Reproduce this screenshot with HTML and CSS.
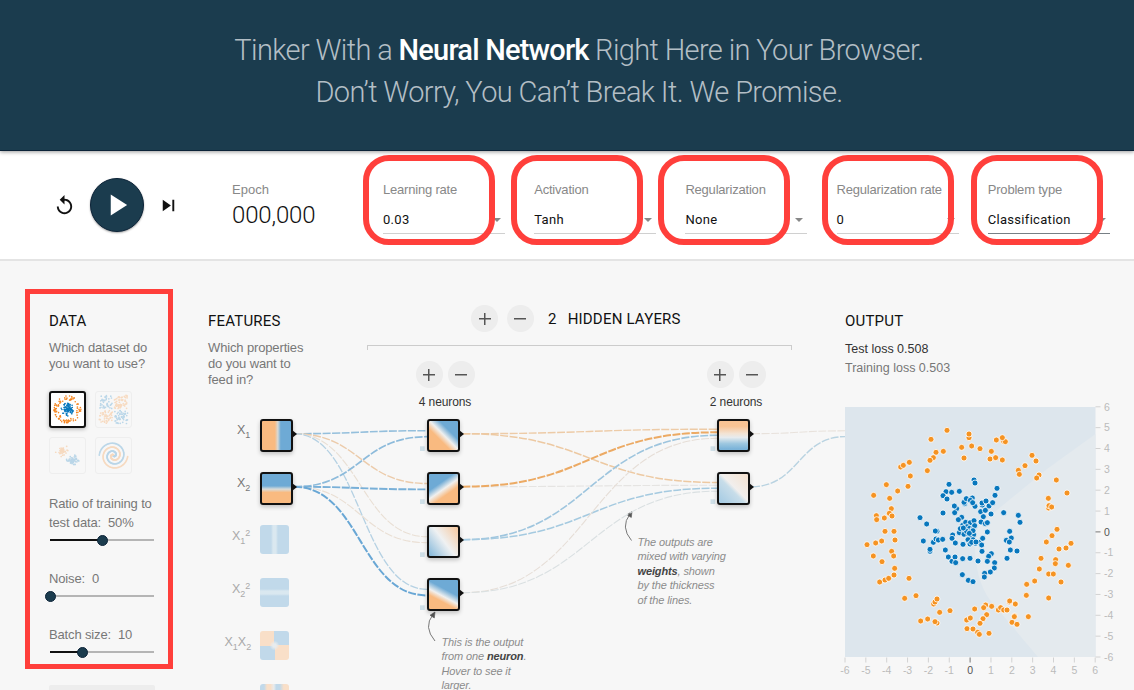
FILE: index.html
```html
<!DOCTYPE html>
<html lang="en">
<head>
<meta charset="utf-8">
<title>Neural Network Playground</title>
<link rel="stylesheet" href="styles.css">
</head>
<body>
<header class="banner">
  <h1>Tinker With a <b>Neural Network</b> Right Here in Your Browser.<br><span class="second">Don’t Worry, You Can’t Break It. We Promise.</span></h1>
</header>

<section class="toolbar">
  <div class="playback">
    <svg class="icon" viewBox="0 0 24 24"><path d="M12 5V1L7 6l5 5V7c3.31 0 6 2.69 6 6s-2.69 6-6 6-6-2.69-6-6H4c0 4.42 3.58 8 8 8s8-3.58 8-8-3.58-8-8-8z"/></svg>
    <button class="play" aria-label="Play"><svg viewBox="0 0 54 54"><path d="M20.5 16v22L37.500 27z"/></svg></button>
    <svg class="icon step" viewBox="0 0 24 24"><path d="M6 18l8.500-6L6 6v12zM16 6v12h2V6h-2z"/></svg>
  </div>
  <div class="epoch"><span class="label">Epoch</span><span class="count">000,000</span></div>
  <div class="fields">
    <div class="field"><span class="label">Learning rate</span><span class="value">0.03</span></div>
    <div class="field"><span class="label">Activation</span><span class="value">Tanh</span></div>
    <div class="field"><span class="label">Regularization</span><span class="value">None</span></div>
    <div class="field"><span class="label">Regularization rate</span><span class="value">0</span></div>
    <div class="field active"><span class="label">Problem type</span><span class="value">Classification</span></div>
  </div>
  <i class="mark m1"></i><i class="mark m2"></i><i class="mark m3"></i><i class="mark m4"></i><i class="mark m5"></i>
</section>

<main class="workspace">
  <section class="data">
    <h2>DATA</h2>
    <p class="hint">Which dataset do<br>you want to use?</p>
    <div class="datasets">
      <svg class="thumb selected" viewBox="0 0 33 33" data-kind="circle"></svg>
      <svg class="thumb" viewBox="0 0 33 33" data-kind="xor"></svg>
      <svg class="thumb" viewBox="0 0 33 33" data-kind="gauss"></svg>
      <svg class="thumb" viewBox="0 0 33 33" data-kind="spiral"></svg>
    </div>
    <div class="slider ratio"><label>Ratio of training to<br>test data:&nbsp; 50%</label><div class="track"><i class="fill" style="width:50%"></i><i class="knob"></i></div></div>
    <div class="slider"><label>Noise:&nbsp; 0</label><div class="track"><i class="fill" style="width:0%"></i><i class="knob"></i></div></div>
    <div class="slider"><label>Batch size:&nbsp; 10</label><div class="track"><i class="fill" style="width:31%"></i><i class="knob"></i></div></div>
    <div class="regenerate"></div>
  </section>

  <section class="features">
    <h2>FEATURES</h2>
    <p class="hint">Which properties<br>do you want to<br>feed in?</p>
  </section>

  <section class="hidden">
    <div class="layers"><button class="round plus"></button><button class="round"></button><h2><span class="num">2</span>HIDDEN LAYERS</h2></div>
    <div class="bracket"></div>
    <div class="neurons">
      <div class="group"><div class="pair"><button class="round plus"></button><button class="round"></button></div><span>4 neurons</span></div>
      <div class="group"><div class="pair"><button class="round plus"></button><button class="round"></button></div><span>2 neurons</span></div>
    </div>
  </section>

  <section class="output">
    <h2>OUTPUT</h2>
    <p class="loss">Test loss 0.508</p>
    <p class="loss train">Training loss 0.503</p>
    <svg class="plot" id="plot" viewBox="0 0 290 280">
      <rect width="250.5" height="250" fill="#dde6ed"/>
      <path d="M250.500 27L202 62 135 117C126 130 129 172 145 193L193 250H250.500z" fill="#e4eaee"/>
    </svg>
  </section>

  <svg class="links" viewBox="0 261 1134 429" id="links">
    <g class="arrow">
      <path d="M631.500 540.500Q620 527 630 514"/><path class="head" d="M632 511.500l-5 3.200 4.300 2.800z"/>
      <path d="M435 641Q423 627 433 614.500"/><path class="head" d="M435 612l-5 3.200 4.300 2.800z"/>
    </g>
    <g class="names">
      <text x="237" y="433.700">X<tspan class="s" y="438">1</tspan></text>
      <text x="237" y="486.700">X<tspan class="s" y="491">2</tspan></text>
      <g class="off">
        <text x="232" y="540">X<tspan class="s" y="544">1</tspan><tspan class="s" y="536">2</tspan></text>
        <text x="232" y="593">X<tspan class="s" y="597">2</tspan><tspan class="s" y="589">2</tspan></text>
        <text x="224.500" y="646">X<tspan class="s" y="650">1</tspan><tspan y="646">X</tspan><tspan class="s" y="650">2</tspan></text>
        <text x="219" y="699">sin(X<tspan class="s" y="703">1</tspan><tspan y="699">)</tspan></text>
      </g>
    </g>
  </svg>
  <div class="nodes">
    <i class="node f r1 g-x1"></i><i class="node f r2 g-x2"></i>
    <i class="node f idle r3 g-x1sq"></i><i class="node f idle r4 g-x2sq"></i><i class="node f idle r5 g-x1x2"></i><i class="node f idle r6 g-sin"></i>
    <i class="node h r1 g-h1"></i><i class="node h r2 g-h2"></i><i class="node h r3 g-h3"></i><i class="node h r4 g-h4"></i>
    <i class="node o r1 g-o1"></i><i class="node o r2 g-o2"></i>
  </div>
  <p class="note weights">The outputs are<br>mixed with varying<br><b>weights</b>, shown<br>by the thickness<br>of the lines.</p>
  <p class="note neuron">This is the output<br>from one <b>neuron</b>.<br>Hover to see it<br>larger.</p>
  <i class="frame"></i>
</main>
<script src="app.js"></script>
</body>
</html>
```
FILE: styles.css
```css
* { box-sizing: border-box; }
body { margin: 0; width: 1134px; height: 690px; overflow: hidden; background: #f7f7f7; font-family: "Liberation Sans", Arial, sans-serif; color: #777; }
button { border: 0; padding: 0; }
h1, h2, p { margin: 0; font-weight: 400; }

.banner { height: 151px; padding: 30px 0 0 24px; background: #1b3c4e; border-bottom: 1px solid #0c2338; text-align: center; position: relative; z-index: 2; box-shadow: 0 1px 4px rgba(0,0,0,.4); }
.banner h1 { font: 300 29px/41.5px Roboto, sans-serif; color: #b3bec5; letter-spacing: -.63px; white-space: nowrap; }
.banner b { font-weight: 500; color: #fff; letter-spacing: -.8px; }

.toolbar { position: relative; height: 110px; background: #fff; border-bottom: 2px solid #e4e4e4; display: flex; align-items: flex-start; padding-left: 53px; }
.playback { display: flex; align-items: center; padding-top: 27px; width: 179px; }
.icon { width: 23px; height: 23px; fill: #111; }
.step { margin-left: -1px; }
.play { width: 54px; height: 54px; margin: 0 14px; border-radius: 50%; background: #1b3c4e; border: 1px solid #0c2338; box-shadow: 0 1px 2px rgba(0,0,0,.35); }
.play svg { display: block; width: 52px; height: 52px; fill: #fff; }
.label { display: block; font-size: 13px; line-height: 16px; letter-spacing: -.2px; color: #888; white-space: nowrap; }
.epoch { width: 151px; padding-top: 31px; }
.epoch .label { letter-spacing: 0; }
.count { display: block; font: 300 24px/30px Roboto, sans-serif; color: #111; margin-top: 2px; letter-spacing: -.15px; }
.fields { display: flex; gap: 29.200px; padding-top: 31px; }
.field { width: 122px; height: 52px; border-bottom: 1px solid #d0d0d0; display: flex; flex-direction: column; gap: 13px; position: relative; }
.field::after { content: ""; position: absolute; right: 4px; top: 36px; border: 4px solid transparent; border-top-color: #888; border-bottom: 0; }
.active { border-color: #777f85; }
.value { font: 400 13px/18px Roboto, sans-serif; color: #111; letter-spacing: .3px; }
.mark { position: absolute; top: 4px; width: 132px; height: 90px; border: 6px solid #ff3f3b; border-radius: 26px; }
.m1 { left: 363px; } .m2 { left: 511px; } .m3 { left: 658px; } .m4 { left: 822px; } .m5 { left: 971px; }

.workspace { position: relative; height: 429px; padding: 50px 0 0 49px; display: grid; grid-template-columns: 106px 106px 425px 289px; column-gap: 53px; align-items: start; overflow: hidden; }
h2 { font: 400 15px/20px Roboto, sans-serif; color: #111; letter-spacing: .2px; white-space: nowrap; }
.hint { margin-top: 9px; font-size: 13px; line-height: 16.200px; letter-spacing: -.14px; color: #777; white-space: nowrap; }
.datasets { display: grid; grid-template-columns: 37px 37px; gap: 9px; margin-top: 19px; }
.thumb { width: 37px; height: 37px; border: 1px solid #eee; border-radius: 3px; }
.thumb > g { opacity: .25; }
.selected { border: 2px solid #111; background: #fff; box-shadow: 0 1px 4px rgba(0,0,0,.3); }
.selected > g { opacity: 1; }
.slider { height: 56px; font-size: 13px; line-height: 19px; letter-spacing: -.14px; white-space: nowrap; }
.slider label { display: block; }
.ratio { margin-top: 20px; height: 75px; }
.track { display: flex; align-items: center; height: 2px; margin: 7px 1px 0; background: #b5b5b5; }
.fill { height: 2px; background: #111; }
.knob { flex: none; width: 11px; height: 11px; margin-left: -5.500px; border-radius: 50%; background: #1b3c4e; border: 1px solid #0c2338; }
.regenerate { height: 30px; background: #ededed; border-radius: 2px; margin-top: 4px; }

.layers { display: flex; align-items: center; height: 27px; margin: -6px 0 0 104px; gap: 8.500px; }
.layers h2 { margin-left: 6px; }
.num { margin-right: 11px; }
.round { flex: none; width: 27px; height: 27px; border-radius: 50%; background: linear-gradient(#555,#555) center / 12px 1.500px no-repeat #ededed; }
.plus { background: linear-gradient(#555,#555) center / 12px 1.500px no-repeat, linear-gradient(#555,#555) center / 1.500px 12px no-repeat, #ededed; }
.bracket { height: 5px; margin: 13px 0 0; border: 1px solid #ccc; border-bottom: 0; }
.neurons { display: flex; gap: 232px; margin: 11px 0 0 48.500px; }
.group { width: 59px; display: flex; flex-direction: column; align-items: center; gap: 6px; font-size: 12px; line-height: 16px; letter-spacing: -.1px; color: #333; }
.group span { white-space: nowrap; }
.pair { display: flex; gap: 5px; }

.loss { font-size: 12.500px; line-height: 19px; color: #333; margin-top: 9px; }
.train { margin-top: 0; color: #777; }
.plot { display: block; overflow: visible; width: 290px; height: 280px; margin-top: 29px; font: 10.500px "Liberation Sans", Arial, sans-serif; }
.plot .axis { fill: #bbb; }
.plot .zero { fill: #555; }

.links { position: absolute; left: 0; top: 0; width: 1134px; height: 429px; fill: none; pointer-events: none; }
.links .arrow path { stroke: #777; }
.links .arrow .head { fill: #555; stroke: #555; stroke-width: .6; }
.names text { font-size: 12.500px; fill: #777; }
.names .s { font-size: 9px; }
.names .off text { fill: #aaa; }
.node { position: absolute; width: 33px; height: 33px; border: 2px solid #111; border-radius: 3px; box-shadow: 0 2px 4px rgba(0,0,0,.22); background-origin: border-box; }
.node::after { content: ""; position: absolute; left: 30px; top: 9px; border: 4px solid transparent; border-left: 5px solid #111; border-right: 0; }
.f { left: 260px; } .h { left: 427px; } .o { left: 717px; }
.r1 { top: 158px; } .r2 { top: 211px; } .r3 { top: 264px; } .r4 { top: 317px; } .r5 { top: 370px; } .r6 { top: 423px; }
.idle { left: 259.500px; width: 29px; height: 29px; border: 0; box-shadow: none; }
.idle::after { display: none; }
.g-x1 { background-image: linear-gradient(90deg, #f9ba80 45%, #d6d9d7 54%, #6eaad5 63%); }
.g-x2 { background-image: linear-gradient(#6eaad5 42%, #d9dcda 52%, #f9ba80 62%); }
.g-x1sq { background: linear-gradient(90deg, #c1d9ea 38%, #dae8f0 45% 55%, #c1d9ea 62%); }
.g-x2sq { background: linear-gradient(#c1d9ea 38%, #dae8f0 45% 55%, #c1d9ea 62%); }
.g-x1x2 { background: radial-gradient(circle, #e8ecee 8%, transparent 24%), conic-gradient(#c1d9ea 25%, #f9dfc8 0 50%, #c1d9ea 0 75%, #f9dfc8 0); }
.g-sin { background: linear-gradient(90deg, #c1d9ea 14%, #f9dfc8 24% 36%, #e8ebed 48%, #c1d9ea 56% 68%, #f9dfc8 82%); }
.g-h1 { background-image: linear-gradient(45deg, #f9ba80 38%, #f0f0ef 51%, #6eaad5 66%); }
.g-h2 { background-image: linear-gradient(145deg, #6eaad5 36%, #f0f0ef 51%, #f9ba80 65%); }
.g-h3 { background-image: linear-gradient(53deg, #7fb5d9 5%, #eff1f2 51%, #f6c69b 95%); }
.g-h4 { background-image: linear-gradient(208deg, #6eaad5 38%, #f0f0ef 54%, #f9ba80 66%); }
.g-o1 { background-image: linear-gradient(#f8c394 22%, #f3e3d3 44%, #e6ebee 56%, #9fc8e0 74%, #7cb4d9 90%); }
.g-o2 { background-image: linear-gradient(45deg, #a9cde4 12%, #c8dde9 45%, #f1efed 53%, #f4e2d2 90%); }
.note { position: absolute; font-size: 11px; line-height: 14.450px; letter-spacing: -.12px; font-style: italic; color: #8c8c8c; white-space: nowrap; }
.note b { color: #444; }
.weights { left: 637.500px; top: 274px; }
.neuron { left: 441.500px; top: 374px; }
.frame { position: absolute; left: 25px; top: 28px; width: 148px; height: 380px; border: 5px solid #ff3f3b; }
```
FILE: app.js
```js
const NS = 'http://www.w3.org/2000/svg';
const BLUE = '#0877bd', ORANGE = '#f59322';
function add(parent, name, attrs, text) {
  const el = document.createElementNS(NS, name);
  for (const k in attrs) el.setAttribute(k, attrs[k]);
  if (text !== undefined) el.textContent = text;
  parent.appendChild(el);
  return el;
}

// Connections: x0, y0, x1, y1, colour, width
const links = document.getElementById('links');
[
  [294,433.7,427,430.7,'#94bfdc',1.6],[294,433.7,427,483.5,'#eccbaa',1.4],[294,433.7,427,536.7,'#e9dfd4',1.1],[294,433.7,427,589.3,'#b5d1e3',1.3],
  [294,486.8,427,436.7,'#8dbbdb',1.7],[294,486.8,427,489.4,'#79b0d8',1.9],[294,486.8,427,542.7,'#eadfd4',1.1],[294,486.8,427,595.4,'#69a7d5',2],
  [462,433.7,717,429.2,'#edcba7',1.4],[462,433.7,717,482.5,'#edc9a2',1.5],
  [462,486.7,717,485.3,'#e5e4e2',1.1],[462,539.7,717,435.3,'#9ec5de',1.6],[462,539.7,717,488.2,'#a5cae0',1.5],
  [462,592.7,717,438.3,'#e6ded7',1.1],[462,592.7,717,491.2,'#dae0e2',1.1],[462,486.7,717,432.3,'#ecaa64',2],
  [752,433.7,845,430.8,'#e8e2dc',1.1],[752,486.7,845,436.6,'#b9d3e1',1.4]
].forEach(([x0,y0,x1,y1,c,w]) => {
  const m = (x0 + x1) / 2;
  add(links, 'path', {d:`M${x0} ${y0}C${m} ${y0} ${m} ${y1} ${x1} ${y1}`, stroke:c, 'stroke-width':w, 'stroke-dasharray':'8 1.5'});
});
[[420,446.3],[420,499.3],[420,552.3],[420,605.3],[710.5,446.3],[710.5,499.3]].forEach(([x,y]) =>
  add(links, 'rect', {x, y, width:4.7, height:4.7, fill:'#cfdfe7'}));

// Scatter plot samples, in thirds of a pixel
const plot = document.getElementById('plot');
const orangeA = '321,91 273,118 387,113 387,102 365,142 395,138 420,146 310,154 288,157 372,174 280,173 270,181 208,187 182,201 190,196 262,212 211,228 139,254 204,259 173,273 101,286 149,295 154,326 148,340 156,348 133,354 109,347 110,359 135,394 162,394 81,434 107,429 125,423 165,420 100,468 126,485 155,454 161,468 164,505 162,525 119,546 135,540 146,535 207,535 194,595 228,587 281,612 285,606 291,597 299,637 330,632 242,663 263,657 291,669 285,665 380,660 391,654 404,627 381,686 399,687 413,697 418,703';
const blueA = '327,253 402,240 405,249 318,275 335,277 358,274 309,287 321,297 374,311 372,307 379,296 397,294 391,301 405,319 398,308 350,326 343,318 344,338 309,339 240,353 260,372 365,352 355,359 368,376 377,367 391,368 402,362 381,380 389,385 401,384 404,377 366,391 358,398 372,403 387,406 380,394 392,395 401,404 391,415 399,419 384,419 291,394 286,393 250,423 280,427 288,417 295,420 308,418 338,405 336,415 346,429 369,433 390,432 407,430 417,427 395,427 270,454 270,448 316,450 325,471 336,484 345,471 347,488 368,476 390,475 414,483 367,524 385,541 399,545 361,386 370,384 399,392 388,400 408,426';
const orangeB = '49,120 71,124 76,125 67,113 34,154 30,177 47,173 67,180 156,166 168,183 135,197 115,211 118,223 177,225 170,234 229,240 261,279 205,295 206,324 207,317 215,321 231,388 216,407 199,426 273,430 237,447 258,444 183,475 227,479 226,491 265,496 178,507 206,522 220,522 243,546 164,543 140,553 139,586 206,594 88,606 89,603 106,612 17,615 11,623 35,619 55,630 62,623 71,630 81,630 20,644 9,656 0,670 104,648 103,650 145,650 96,667 111,673 27,700';
const blueB = '51,265 45,286 7,315 6,309 18,303 27,318 38,308 2,335 16,331 33,342 71,338 10,350 3,366 16,371 22,368 115,346 120,367 22,396 89,394 94,414 79,421 88,426 8,415 5,435 91,450 111,453 6,454 34,461 26,469 81,475 22,484 44,488 43,504 14,520 13,531 31,516';
function scatter(list, dx, fill) {
  list.split(' ').forEach(p => {
    const [x, y] = p.split(',').map(Number);
    add(plot, 'circle', {cx:(x+dx)/3, cy:(y-21)/3, r:3, fill, stroke:'#fff', 'stroke-width':.8});
  });
}
scatter(orangeA, -15, ORANGE); scatter(orangeB, 405, ORANGE);
scatter(blueA, -15, BLUE); scatter(blueB, 405, BLUE);
for (let v = -6; v <= 6; v++) {
  const p = (v + 6) * 20.85, q = 250 - p, cls = v === 0 ? 'zero' : 'axis', c = v === 0 ? '#777' : '#d2d2d2';
  add(plot, 'path', {d:`M${p} 250.5v5M250.5 ${q}h5`, stroke:c, 'stroke-width':1});
  add(plot, 'text', {x:p, y:267, 'text-anchor':'middle', class:cls}, v);
  add(plot, 'text', {x:259, y:q + 3.7, class:cls}, v);
}

// Dataset thumbnails
let seed = 11;
const rnd = () => (seed = (seed * 16807) % 2147483647) / 2147483647;
document.querySelectorAll('.thumb').forEach(svg => {
  const g = add(svg, 'g', {}), kind = svg.dataset.kind;
  const dot = (x, y, blue) => add(g, 'circle', {cx:x, cy:y, r:.8, fill:blue ? BLUE : '#f5851f'});
  const polar = (cx, cy, r, a, b) => dot(cx + r*Math.cos(a), cy + r*Math.sin(a), b);
  if (kind === 'circle') {
    for (let i = 0; i < 95; i++) polar(16.5, 16.5, 9.5 + rnd()*4.2, rnd()*6.283, false);
    for (let i = 0; i < 100; i++) polar(16.5, 16.5, rnd()*6.5, rnd()*6.283, true);
  } else if (kind === 'xor') {
    for (let i = 0; i < 230; i++) {
      const x = 3 + rnd()*27, y = 3 + rnd()*27;
      if (Math.abs(x-16.5) > .9 && Math.abs(y-16.5) > .9) dot(x, y, (x < 16.5) === (y < 16.5));
    }
  } else if (kind === 'gauss') {
    for (let i = 0; i < 90; i++) { polar(11.5, 11.5, rnd()*rnd()*6.5, rnd()*6.283, false); polar(21.5, 21.5, rnd()*rnd()*7.5, rnd()*6.283, true); }
  } else {
    for (let i = 0; i < 150; i++) { const t = i/150; polar(16.5, 16.5, t*13.5, -t*11.2+14.3, true); polar(16.5, 16.5, t*13.5, -t*11.2+11.2, false); }
  }
});
```
